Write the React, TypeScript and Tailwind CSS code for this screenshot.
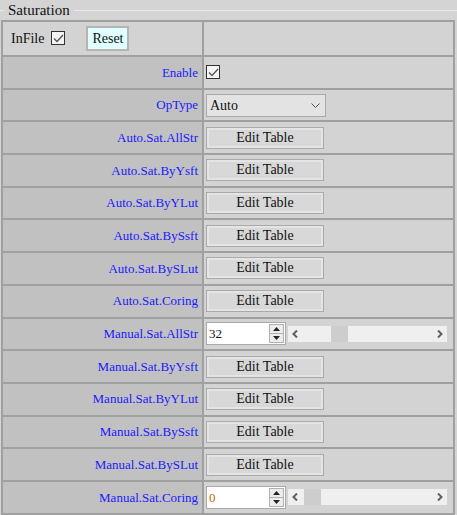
const Check = () => (
  <span className="inline-flex h-[14px] w-[14px] items-center justify-center border border-[#333] bg-[#f4f4f4]">
    <svg width="11" height="9" viewBox="0 0 11 9">
      <path d="M1 4.5 L4 7.5 L10 1" fill="none" stroke="#555" strokeWidth="1.3" />
    </svg>
  </span>
);

const EditButton = () => (
  <button className="h-[22px] w-[118px] border border-[#aaaaaa] bg-[#d8d8d8] font-['Liberation_Serif',serif] text-[14px] leading-none text-[#111] shadow-[inset_0_0_0_2px_#e4e4e4]">
    Edit Table
  </button>
);

const Slider = ({ value, thumb }: { value: string; thumb: number }) => (
  <div className="flex items-center gap-[2px]">
    <div className="flex h-[23px] w-[80px] items-stretch border border-[#aaaaaa] bg-white">
      <span className={`flex-1 pl-[2px] text-[13px] leading-[21px] ${value === "0" ? "text-[#c06a00]" : "text-[#111]"}`}>
        {value}
      </span>
      <div className="my-px mr-px flex w-[15px] flex-col border border-[#b0b0b0] bg-[#ececec]">
        <div className="flex flex-1 items-center justify-center border-b border-[#b0b0b0]">
          <svg width="7" height="4" viewBox="0 0 7 4"><path d="M0 4 L3.5 0 L7 4Z" fill="#222" /></svg>
        </div>
        <div className="flex flex-1 items-center justify-center">
          <svg width="7" height="4" viewBox="0 0 7 4"><path d="M0 0 L3.5 4 L7 0Z" fill="#222" /></svg>
        </div>
      </div>
    </div>
    <div className="relative h-[16px] w-[159px] bg-[#efefef]">
      <svg className="absolute left-[4px] top-[4px]" width="6" height="8" viewBox="0 0 6 8">
        <path d="M5 0.5 L1.5 4 L5 7.5" fill="none" stroke="#606060" strokeWidth="2" />
      </svg>
      <div className="absolute top-0 h-[16px] w-[17px] bg-[#cdcdcd]" style={{ left: thumb }} />
      <svg className="absolute right-[4px] top-[4px]" width="6" height="8" viewBox="0 0 6 8">
        <path d="M1 0.5 L4.5 4 L1 7.5" fill="none" stroke="#606060" strokeWidth="2" />
      </svg>
    </div>
  </div>
);

type Row = { label: string; kind: "check" | "select" | "edit" | "slider"; value?: string; thumb?: number };

const rows: Row[] = [
  { label: "Enable", kind: "check" },
  { label: "OpType", kind: "select" },
  { label: "Auto.Sat.AllStr", kind: "edit" },
  { label: "Auto.Sat.ByYsft", kind: "edit" },
  { label: "Auto.Sat.ByYLut", kind: "edit" },
  { label: "Auto.Sat.BySsft", kind: "edit" },
  { label: "Auto.Sat.BySLut", kind: "edit" },
  { label: "Auto.Sat.Coring", kind: "edit" },
  { label: "Manual.Sat.AllStr", kind: "slider", value: "32", thumb: 43 },
  { label: "Manual.Sat.ByYsft", kind: "edit" },
  { label: "Manual.Sat.ByYLut", kind: "edit" },
  { label: "Manual.Sat.BySsft", kind: "edit" },
  { label: "Manual.Sat.BySLut", kind: "edit" },
  { label: "Manual.Sat.Coring", kind: "slider", value: "0", thumb: 16 },
];

const Field = ({ row }: { row: Row }) => {
  if (row.kind === "check") return <Check />;
  if (row.kind === "select")
    return (
      <div className="flex h-[23px] w-[120px] items-center justify-between border border-[#aaaaaa] bg-[#e3e3e3] pl-[3px] pr-[5px] text-[14px] text-[#111]">
        <span>Auto</span>
        <svg width="9" height="5" viewBox="0 0 9 5">
          <path d="M0.5 0.5 L4.5 4.5 L8.5 0.5" fill="none" stroke="#555" strokeWidth="1" />
        </svg>
      </div>
    );
  if (row.kind === "edit") return <EditButton />;
  return <Slider value={row.value!} thumb={row.thumb!} />;
};

export default function App() {
  return (
    <div className="h-[515px] w-[457px] overflow-hidden bg-[#d4d4d4] font-['Liberation_Serif','Times_New_Roman',serif]">
      {/* legend */}
      <div className="flex h-[20px] items-center">
        <div className="h-px w-[4px] bg-[#e8e8e8]" />
        <span className="px-[4px] text-[15px] leading-none text-[#111]">Saturation</span>
        <div className="h-px flex-1 bg-[#e8e8e8]" />
      </div>

      <table className="ml-px w-[454px] border-collapse border-2 border-[#a0a0a0] font-['Liberation_Serif',serif] text-[13px]">
        <tbody>
          <tr className="h-[35px] bg-[#d3d3d3]">
            <td className="w-[201px] border-2 border-[#a0a0a0] pl-[8px]">
              <div className="flex items-center">
                <span className="text-[14px] text-[#111]">InFile</span>
                <span className="ml-[7px]">
                  <Check />
                </span>
                <button className="ml-[21px] h-[25px] w-[43px] border-2 border-[#b4b4b4] bg-[#e0ffff] font-['Liberation_Serif',serif] text-[14px] leading-none text-[#111]">
                  Reset
                </button>
              </div>
            </td>
            <td className="border-2 border-[#a0a0a0]" />
          </tr>
          {rows.map((r) => (
            <tr key={r.label} className="h-[32.7px]">
              <td className="border-2 border-[#a0a0a0] bg-[#c1c1c1] pr-[4px] text-right text-[#1a1aff]">{r.label}</td>
              <td className="border-2 border-[#a0a0a0] bg-[#d3d3d3] pl-[2px]">
                <div className="flex items-center">
                  <Field row={r} />
                </div>
              </td>
            </tr>
          ))}
        </tbody>
      </table>
    </div>
  );
}
